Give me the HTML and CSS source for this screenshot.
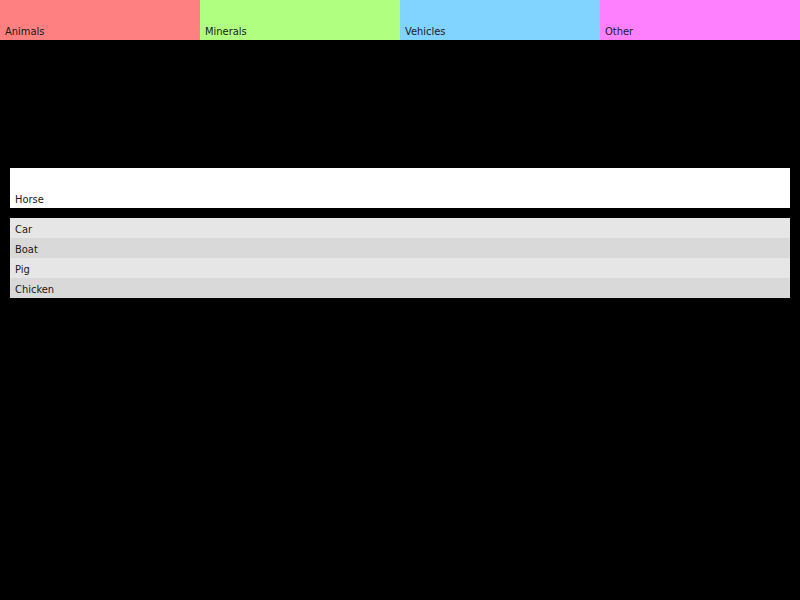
FILE: index.html
```html
<!DOCTYPE html>
<html>
<head>
<meta charset="utf-8">
<link rel="stylesheet" href="styles.css">
</head>
<body>
<div class="tabs">
  <div class="tab animals">Animals</div>
  <div class="tab minerals">Minerals</div>
  <div class="tab vehicles">Vehicles</div>
  <div class="tab other">Other</div>
</div>
<div class="content">
  <div class="selected">Horse</div>
  <ul class="list">
    <li class="row">Car</li>
    <li class="row">Boat</li>
    <li class="row">Pig</li>
    <li class="row">Chicken</li>
  </ul>
</div>
</body>
</html>
```
FILE: styles.css
```css
html, body {
  margin: 0;
  padding: 0;
  background: #000;
  font-family: "DejaVu Sans Condensed", "DejaVu Sans", sans-serif;
  font-size: 11px;
  color: #1a1a1a;
}
.tabs {
  display: flex;
  height: 40px;
}
.tab {
  width: 200px;
  display: flex;
  align-items: flex-end;
  padding: 0 0 2px 5px;
  box-sizing: border-box;
  line-height: 13px;
}
.animals { background: #ff8080; }
.minerals { background: #b0ff80; }
.vehicles { background: #80d4ff; }
.other { background: #ff80ff; }
.content {
  padding: 128px 10px 0 10px;
}
.selected {
  background: #fff;
  height: 40px;
  display: flex;
  align-items: flex-end;
  padding: 0 0 2px 5px;
  box-sizing: border-box;
  line-height: 13px;
}
.list {
  list-style: none;
  margin: 10px 0 0 0;
  padding: 0;
}
.row {
  height: 20px;
  box-sizing: border-box;
  padding: 3px 0 0 5px;
  line-height: 17px;
  background: #e6e6e6;
}
.row:nth-child(even) {
  background: #d9d9d9;
}
```
